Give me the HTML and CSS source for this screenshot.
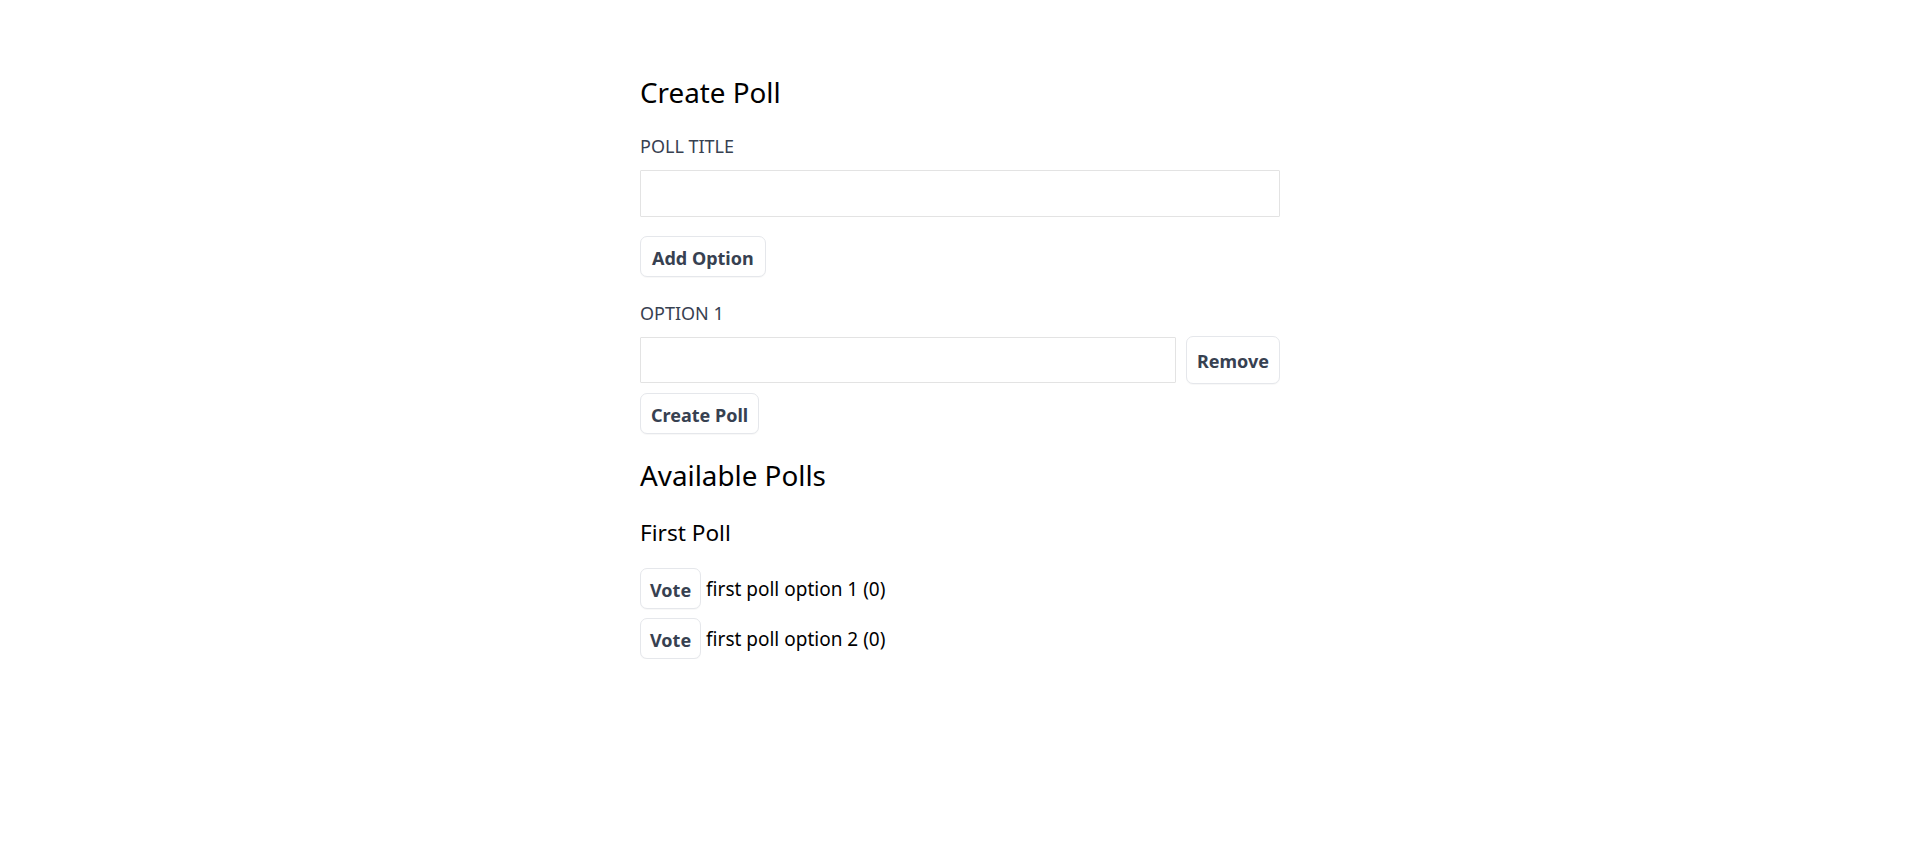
FILE: index.html
```html
<!DOCTYPE html>
<html lang="en">
<head>
<meta charset="utf-8">
<title>Polls</title>
<link rel="stylesheet" href="styles.css">
</head>
<body>
<main class="page">
  <section class="create">
    <h2 class="heading">Create Poll</h2>
    <label class="field-label" for="poll-title">POLL TITLE</label>
    <input class="text-input" id="poll-title" type="text">
    <button class="btn btn-add" type="button">Add Option</button>
    <label class="field-label option-label" for="opt-1">OPTION 1</label>
    <div class="option-row">
      <input class="text-input option-input" id="opt-1" type="text">
      <button class="btn btn-remove" type="button">Remove</button>
    </div>
    <button class="btn btn-create" type="button">Create Poll</button>
  </section>
  <section class="polls">
    <h2 class="heading heading-polls">Available Polls</h2>
    <h3 class="poll-name">First Poll</h3>
    <div class="vote-row"><button class="btn btn-vote" type="button">Vote</button> first poll option 1 (0)</div>
    <div class="vote-row"><button class="btn btn-vote" type="button">Vote</button> first poll option 2 (0)</div>
  </section>
</main>
</body>
</html>
```

FILE: styles.css
```css
* { box-sizing: border-box; }
html, body { margin: 0; padding: 0; background: #fff; }
body {
  font-family: "Noto Sans", "Open Sans", sans-serif;
  color: #000;
  font-size: 19px;
}
.page {
  width: 640px;
  margin: 0 auto;
  padding-top: 74px;
}
.heading {
  font-size: 27.8px;
  font-weight: 400;
  line-height: 36px;
  margin: 0;
}
.field-label {
  display: block;
  font-size: 18px;
  line-height: 24px;
  color: #374151;
  margin-top: 24px;
}
.text-input {
  display: block;
  width: 100%;
  height: 47px;
  border: 1px solid #e3e3e3;
  border-radius: 1px;
  margin-top: 12px;
  padding: 0 10px;
  font: inherit;
  background: #fff;
  outline: none;
}
.btn {
  display: inline-block;
  height: 41px;
  padding: 2px 10px 0;
  font-family: "Noto Sans", "Open Sans", sans-serif;
  font-size: 18px;
  font-weight: 700;
  color: #374151;
  background: #fff;
  border: 1px solid #e5e7eb;
  border-radius: 7px;
  box-shadow: 0 1px 1px rgba(0, 0, 0, 0.03);
  vertical-align: middle;
}
.btn-add { margin-top: 19px; display: block; padding: 2px 11px 0; }
.btn-vote { padding: 2px 9px 0; }
.option-label { margin-top: 24px; }
.option-row {
  display: flex;
  align-items: center;
  gap: 10px;
  margin-top: 11px;
}
.option-input { margin-top: 0; flex: 1; height: 46px; }
.btn-remove { height: 48px; }
.btn-create { display: block; margin-top: 9px; }
.heading-polls { margin-top: 23px; }
.poll-name {
  font-size: 22.6px;
  font-weight: 400;
  line-height: 30px;
  margin: 25px 0 0;
}
.vote-row {
  margin-top: 20px;
  height: 41px;
  display: flex;
  align-items: center;
  white-space: pre;
}
.vote-row + .vote-row { margin-top: 9px; }
```
